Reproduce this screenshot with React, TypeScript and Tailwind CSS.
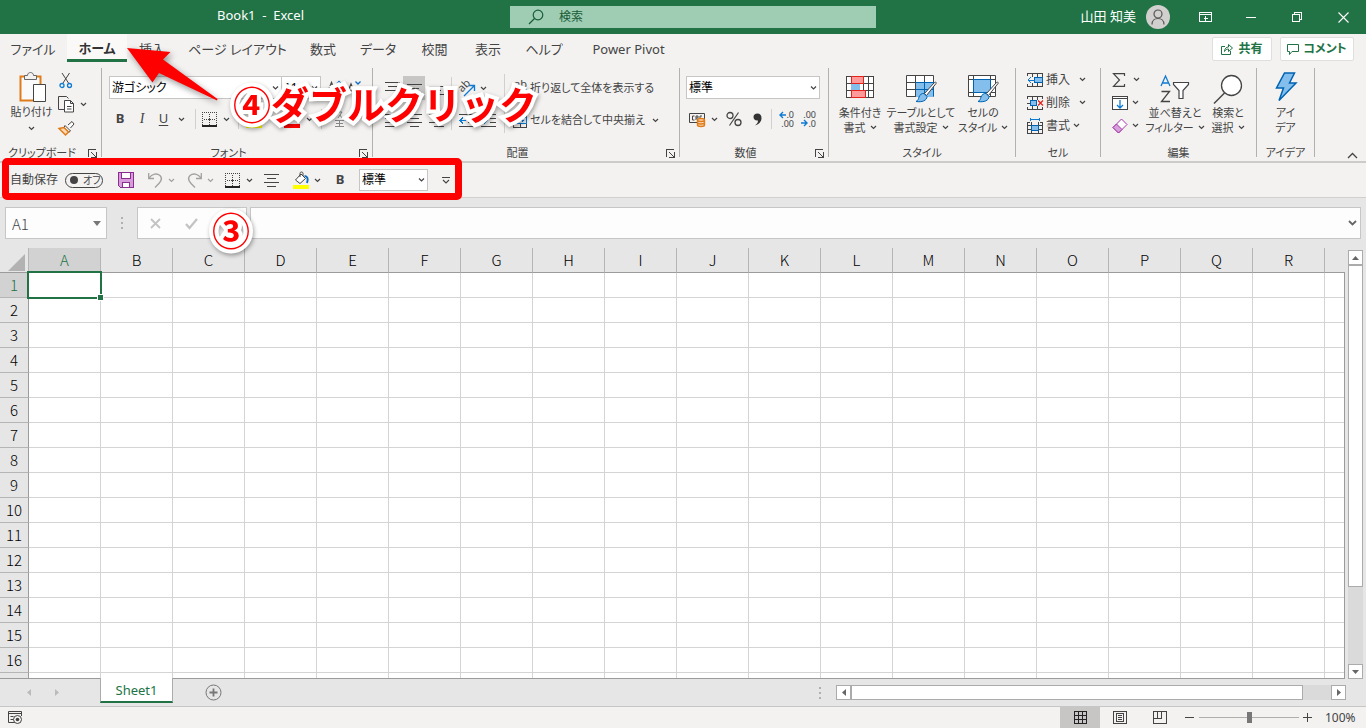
import type { ReactNode } from "react";
import clsx from "clsx";

const COLUMNS = ["A", "B", "C", "D", "E", "F", "G", "H", "I", "J", "K", "L", "M", "N", "O", "P", "Q", "R", ""];
const ROWS = Array.from({ length: 17 }, (_, i) => i + 1);

const TABS = [
  { label: "ファイル", width: "w-[66px]" },
  { label: "ホーム", width: "w-[60px]", active: true },
  { label: "挿入", width: "w-[50px]" },
  { label: "ページ レイアウト", width: "w-[121px]" },
  { label: "数式", width: "w-[50px]" },
  { label: "データ", width: "w-[60px]" },
  { label: "校閲", width: "w-[53px]" },
  { label: "表示", width: "w-[54px]" },
  { label: "ヘルプ", width: "w-[58px]" },
  { label: "Power Pivot", width: "w-[111px]" },
];

type IconProps = {
  w: number;
  h: number;
  className?: string;
  crisp?: boolean;
  children: ReactNode;
};

function Icon({ w, h, className, crisp, children }: IconProps) {
  return (
    <svg
      width={w}
      height={h}
      viewBox={`0 0 ${w} ${h}`}
      fill="none"
      stroke="#444"
      shapeRendering={crisp ? "crispEdges" : undefined}
      className={clsx("shrink-0 overflow-visible", className)}
      aria-hidden="true"
    >
      {children}
    </svg>
  );
}

function Chevron({ className, color = "#444" }: { className?: string; color?: string }) {
  return (
    <Icon w={7} h={5} className={className}>
      <path d="M1 1l2.5 2.5L6 1" stroke={color} strokeWidth="1.2" />
    </Icon>
  );
}

function IconButton({ label, className, children }: { label: string; className?: string; children: ReactNode }) {
  return (
    <button type="button" aria-label={label} className={clsx("flex h-6 shrink-0 items-center justify-center", className)}>
      {children}
    </button>
  );
}

function Separator({ className }: { className?: string }) {
  return (
    <div className={clsx("flex shrink-0 justify-center", className)}>
      <div className="w-px bg-[#d2d0ce]" />
    </div>
  );
}

function Combo({ label, value, className }: { label: string; value: string; className?: string }) {
  return (
    <div className={clsx("relative shrink-0", className)}>
      <select
        aria-label={label}
        defaultValue={value}
        className="block size-full appearance-none border border-[#c8c6c4] bg-white pl-[2px] text-xs text-black outline-none"
      >
        <option>{value}</option>
      </select>
      <Chevron className="pointer-events-none absolute right-[3px] top-1/2 -translate-y-1/2" />
    </div>
  );
}

function Group({
  title,
  launcher,
  className,
  children,
}: {
  title: string;
  launcher?: boolean;
  className: string;
  children: ReactNode;
}) {
  return (
    <>
      <section aria-label={title} className={clsx("flex shrink-0 flex-col", className)}>
        <div className="flex h-[78px]">{children}</div>
        <div className="flex h-[14px] items-center">
          <span className="flex-1 whitespace-nowrap text-center text-[11px] leading-[14px]">{title}</span>
          {launcher && (
            <button type="button" aria-label={`${title}の設定`} className="flex w-[17px] justify-center">
              <Icon w={9} h={9} crisp>
                <path d="M.5 8V.5H8M8.5 3v5.5H3M3.5 3.5l5 5" />
              </Icon>
            </button>
          )}
        </div>
      </section>
      <div className="h-[89px] w-px shrink-0 bg-[#b3b0ad]" />
    </>
  );
}

function LargeButton({
  icon,
  lines,
  chevron,
  className,
}: {
  icon: ReactNode;
  lines: [string, string];
  chevron?: boolean;
  className: string;
}) {
  return (
    <button
      type="button"
      className={clsx("flex shrink-0 flex-col items-center whitespace-nowrap text-[11px] leading-[15px]", className)}
    >
      <span className="flex h-[37px] items-center">{icon}</span>
      <span>{lines[0]}</span>
      <span className="flex items-center gap-1">
        {lines[1]}
        {chevron && <Chevron />}
      </span>
    </button>
  );
}

function LinesIcon({ rows }: { rows: [number, number, number][] }) {
  return (
    <Icon w={15} h={13} crisp>
      {rows.map(([x, y, width]) => (
        <path key={y} d={`M${x} ${y}.5h${width}`} />
      ))}
    </Icon>
  );
}

function BordersIcon() {
  return (
    <Icon w={15} h={15} crisp>
      <path d="M0 .5h15" strokeDasharray="1 1" />
      <path d="M.5 0v13M14.5 0v13" strokeDasharray="1 1" />
      <path d="M7.5 2v11M2 7.5h11" strokeDasharray="1 1" />
      <path d="M6 7.5h3M7.5 6v3" />
      <path d="M0 14h15" stroke="#222" strokeWidth="2" />
    </Icon>
  );
}

function FillIcon() {
  return (
    <Icon w={17} h={18}>
      <path d="M2.5 9L8 3l4.5 4.5L7 12.500z" fill="#fff" />
      <path d="M7 6V2.500c0-2 3-2 3 0V5" />
      <path d="M11.500 5c3 0 4 3 2.500 7" stroke="#0f6cbd" strokeWidth="2" />
      <path d="M0 16h16" stroke="#ff0" strokeWidth="4" />
    </Icon>
  );
}

function BrushOverlay() {
  return (
    <>
      <path d="M30 8.500L20.500 20.500l-2-2L28 8c1.500-1.500 3-.5 2 .5z" fill="#fff" />
      <path d="M18 18.500l3 3c0 4-5 6-11 5 2-1 2.500-2.500 3-4.500s3-4 5-3.500z" fill="#83beec" stroke="#0063b1" />
    </>
  );
}

function Ribbon() {
  return (
    <div className="flex h-[97px] shrink-0 overflow-hidden border-b-2 border-[#cdcbc9] bg-[#f3f2f1] pt-[2px] text-xs text-[#444]">
      <Group title="クリップボード" launcher className="w-[101px]">
        <button type="button" className="ml-2 flex w-[47px] shrink-0 flex-col items-center whitespace-nowrap text-[11px]">
          <Icon w={30} h={33} className="mt-[3px]">
            <path d="M3.500 5.500h20v24h-20z" fill="#fafafa" stroke="#e07b1a" strokeWidth="2" />
            <path d="M7.500 8.500v-4h3c0-4 6-4 6 0h3v4z" fill="#f3f2f1" stroke="#666" />
            <path d="M16.500 13.500h12v17h-12z" fill="#fff" />
          </Icon>
          <span className="leading-[15px]">貼り付け</span>
          <Chevron className="mt-[7px]" />
        </button>
        <div className="flex flex-col items-start">
          <IconButton label="切り取り" className="w-[22px]">
            <Icon w={14} h={17}>
              <path d="M3 1l6.500 10M10.500 1L4 11" />
              <circle cx="3" cy="13.500" r="2" stroke="#0f7ad1" strokeWidth="1.300" />
              <circle cx="10.500" cy="13.500" r="2" stroke="#0f7ad1" strokeWidth="1.300" />
            </Icon>
          </IconButton>
          <IconButton label="コピー" className="gap-[5px] pl-[3px]">
            <Icon w={17} h={17}>
              <path d="M6 13.500H.5V.5h8l2 2" />
              <path d="M6.500 4.500h6l3 3v8.500h-9zM12.500 4.500v3h3M9 10.500h4.500M9 13h4.500" fill="#fff" />
            </Icon>
            <Chevron />
          </IconButton>
          <IconButton label="書式のコピー/貼り付け" className="w-[22px]">
            <Icon w={17} h={15}>
              <path d="M10 4l4-3.500 2 2.500-3.500 4" fill="#fff" />
              <path d="M7 4.500l5.500 5.500-2 1.500L6 6.500z" fill="#fff" />
              <path d="M6 6.500L1 7.500l6.500 6.500 3-3z" fill="#fbd9b5" stroke="#e07b1a" strokeWidth="1.500" />
            </Icon>
          </IconButton>
        </div>
      </Group>

      <Group title="フォント" launcher className="w-[270px]">
        <div className="flex flex-col pl-[7px] pt-2">
          <div className="flex h-[23px]">
            <Combo label="フォント名" value="游ゴシック" className="-mr-px w-[173px]" />
            <Combo label="フォント サイズ" value="11" className="w-10" />
            <IconButton label="フォント サイズの拡大" className="w-[22px] pl-1">
              <Icon w={17} h={16}>
                <path d="M1 14L5.500 2.500 10 14M2.500 10h6" strokeWidth="1.300" />
                <path d="M10.500 4L13 1.500 15.500 4" stroke="#0f6cbd" strokeWidth="1.300" />
              </Icon>
            </IconButton>
            <IconButton label="フォント サイズの縮小" className="w-[22px]">
              <Icon w={16} h={16}>
                <path d="M1 14L5 4l4 10M2.500 10.500h5" strokeWidth="1.300" />
                <path d="M9.500 1.500L12 4l2.500-2.500" stroke="#0f6cbd" strokeWidth="1.300" />
              </Icon>
            </IconButton>
          </div>
          <div className="mt-2 flex items-center">
            <IconButton label="太字" className="w-[22px]">
              <span className="text-[13px] font-bold">B</span>
            </IconButton>
            <IconButton label="斜体" className="w-[22px]">
              <span className="font-['Liberation_Serif',serif] text-sm italic">I</span>
            </IconButton>
            <IconButton label="下線" className="w-[21px]">
              <span className="text-[13px] underline underline-offset-2">U</span>
            </IconButton>
            <Chevron className="mx-1" />
            <Separator className="h-5 w-[13px]" />
            <IconButton label="罫線" className="gap-[6px]">
              <BordersIcon />
              <Chevron />
            </IconButton>
            <Separator className="h-5 w-4" />
            <IconButton label="塗りつぶしの色" className="gap-[6px]">
              <FillIcon />
              <Chevron />
            </IconButton>
            <IconButton label="フォントの色" className="ml-2 gap-[6px]">
              <Icon w={16} h={18}>
                <path d="M3 12L8 1l5 11M5 8h6" strokeWidth="1.300" />
                <path d="M0 16h16" stroke="#f00" strokeWidth="4" />
              </Icon>
              <Chevron />
            </IconButton>
            <Separator className="h-5 w-4" />
            <IconButton label="ふりがな" className="w-5">
              <Icon w={9} h={17}>
                <path d="M2 1h5L3 7M5 4l2 3M0 9.500h9M1 12.500h7M0 15.500h9M4.500 9v7" stroke="#888" />
              </Icon>
            </IconButton>
          </div>
        </div>
      </Group>

      <Group title="配置" launcher className="w-[306px]">
        <div className="grid h-[71px] grid-cols-3 content-start gap-y-2 pl-[8px] pt-2">
          <IconButton label="上揃え" className="w-[22px]">
            <LinesIcon rows={[[0, 0, 15], [3, 4, 9], [0, 8, 15]]} />
          </IconButton>
          <IconButton label="上下中央揃え" className="w-[22px] bg-[#c8c6c4]">
            <LinesIcon rows={[[0, 2, 15], [3, 6, 9], [0, 10, 15]]} />
          </IconButton>
          <IconButton label="下揃え" className="w-[22px]">
            <LinesIcon rows={[[0, 4, 15], [3, 8, 9], [0, 12, 15]]} />
          </IconButton>
          <IconButton label="左揃え" className="w-[22px]">
            <LinesIcon rows={[[0, 0, 15], [0, 4, 10], [0, 8, 15], [0, 12, 10]]} />
          </IconButton>
          <IconButton label="中央揃え" className="w-[22px]">
            <LinesIcon rows={[[0, 0, 15], [3, 4, 9], [0, 8, 15], [3, 12, 9]]} />
          </IconButton>
          <IconButton label="右揃え" className="w-[22px]">
            <LinesIcon rows={[[0, 0, 15], [5, 4, 10], [0, 8, 15], [5, 12, 10]]} />
          </IconButton>
        </div>
        <Separator className="mt-[9px] h-[53px] w-2" />
        <div className="flex w-[45px] flex-col items-start gap-2 pt-2">
          <IconButton label="方向" className="gap-1 pl-1">
            <Icon w={17} h={17}>
              <text x="1" y="12" transform="rotate(-45 3 10)" fontSize="11" fill="#444" stroke="none">
                ab
              </text>
              <path d="M5 16L15 6M10 5.500h5.500V11" stroke="#0f7ad1" strokeWidth="1.300" />
            </Icon>
            <Chevron />
          </IconButton>
          <div className="flex">
            <IconButton label="インデントを減らす" className="w-[22px]">
              <Icon w={15} h={13} crisp>
                <path d="M0 .5h15M9 4.500h6M9 8.500h6M0 12.500h15" />
                <path d="M0 6.500h7M1 6.500l3-3M1 6.500l3 3" stroke="#0f7ad1" />
              </Icon>
            </IconButton>
            <IconButton label="インデントを増やす" className="w-[22px]">
              <Icon w={15} h={13} crisp>
                <path d="M0 .5h15M9 4.500h6M9 8.500h6M0 12.500h15" />
                <path d="M0 6.500h7M6 6.500l-3-3M6 6.500l-3 3" stroke="#0f7ad1" />
              </Icon>
            </IconButton>
          </div>
        </div>
        <Separator className="mt-[6px] h-[59px] w-[9px]" />
        <div className="flex flex-col gap-2 whitespace-nowrap pl-1 pt-2 text-[11px]">
          <button type="button" className="flex h-6 items-center gap-[3px]">
            <Icon w={14} h={18}>
              <text x="1" y="9" fontSize="11" fill="#444" stroke="none">
                ab
              </text>
              <path d="M1 10.500v5h2M6 13.500h5c3 0 3-4 1-4M8 11l-2.500 2.500L8 16" stroke="#0f7ad1" />
            </Icon>
            折り返して全体を表示する
          </button>
          <button type="button" className="flex h-6 items-center gap-[3px]">
            <Icon w={14} h={15} crisp>
              <path d="M.5.5h13v14H.5zM7.500 0v4M7.500 11v4" />
              <path d="M.5 4.500h13v6H.5z" fill="#e5f1fb" stroke="#0f7ad1" />
              <path d="M3 7.500h8M5 6v3M9 6v3" stroke="#0f7ad1" />
            </Icon>
            セルを結合して中央揃え
            <Chevron className="ml-1" />
          </button>
        </div>
      </Group>

      <Group title="数値" launcher className="w-[148px]">
        <div className="flex flex-col pl-[6px] pt-2">
          <Combo label="表示形式" value="標準" className="h-[23px] w-[134px]" />
          <div className="mt-2 flex items-center">
            <IconButton label="通貨表示形式" className="gap-[5px] pl-[3px]">
              <Icon w={17} h={15}>
                <path d="M.5 1.500h15v9H.5z" />
                <path d="M5.500 4H3.500v4H5.500M7 8V4h2v2H7M11 8V4h2" />
                <path
                  d="M8.500 8v5c0 2 7 2 7 0V8c0-2-7-2-7 0zM8.500 8c0 2 7 2 7 0M8.500 10.500c0 2 7 2 7 0"
                  fill="#fbd9b5"
                  stroke="#e07b1a"
                  strokeWidth="1.400"
                />
              </Icon>
              <Chevron />
            </IconButton>
            <IconButton label="パーセント" className="ml-1 w-6">
              <Icon w={16} h={16}>
                <circle cx="4" cy="4.500" r="3" strokeWidth="1.300" />
                <circle cx="12" cy="11.500" r="3" strokeWidth="1.300" />
                <path d="M12.500 1.500l-9 13" strokeWidth="1.200" />
              </Icon>
            </IconButton>
            <IconButton label="桁区切り" className="w-[22px]">
              <Icon w={9} h={13}>
                <path
                  d="M4.500.5C7 .5 8.500 2 8.500 5c0 4-3 6.500-6.500 7.500 2-1.500 3-3 3-5C2.500 8 .5 6.500.5 4c0-2 1.500-3.500 4-3.500z"
                  fill="#333"
                  stroke="none"
                />
              </Icon>
            </IconButton>
            <Separator className="h-5 w-[7px]" />
            {[
              { label: "小数点以下の桁数を増やす", top: ".0", bottom: ".00", arrow: "M7 4H1M4 1L1 4l3 3" },
              { label: "小数点以下の桁数を減らす", top: ".00", bottom: ".0", arrow: "M0 12h6M3 9l3 3-3 3" },
            ].map((item) => (
              <IconButton key={item.label} label={item.label} className="w-[22px]">
                <Icon w={15} h={17}>
                  <text x="15" y="7" textAnchor="end" fontSize="9" fill="#444" stroke="none">
                    {item.top}
                  </text>
                  <text x="15" y="16" textAnchor="end" fontSize="9" fill="#444" stroke="none">
                    {item.bottom}
                  </text>
                  <path d={item.arrow} stroke="#0f7ad1" strokeWidth="1.400" />
                </Icon>
              </IconButton>
            ))}
          </div>
        </div>
      </Group>

      <Group title="スタイル" className="w-[186px]">
        <LargeButton
          className="ml-1 w-[54px]"
          lines={["条件付き", "書式"]}
          chevron
          icon={
            <Icon w={28} h={22} crisp>
              <path d="M.5.5h27v21H.5z" fill="#fff" />
              <path d="M0 7.500h28M0 14.500h28M5.500 0v22M17.500 0v22M22.500 0v22" />
              <path d="M5 7h9v8H5z" fill="#83beec" stroke="none" />
              <path d="M5.500.5h12v7h-12zM5.500 14.500h14v7h-14z" fill="#ff9a9a" stroke="#e3221a" />
            </Icon>
          }
        />
        <LargeButton
          className="w-[68px]"
          lines={["テーブルとして", "書式設定"]}
          chevron
          icon={
            <Icon w={31} h={28} className="mt-1">
              <path d="M.5.5h27v21H.5z" fill="#fff" />
              <path d="M10 8h18v14H10z" fill="#83beec" stroke="none" />
              <path d="M0 7.500h28M0 14.500h28M9.500 0v22M18.500 0v22" />
              <path d="M9.500 7.500h18v14M9.500 14.500h18M18.500 8v13" stroke="#0063b1" />
              <BrushOverlay />
            </Icon>
          }
        />
        <LargeButton
          className="w-[56px]"
          lines={["セルの", "スタイル"]}
          chevron
          icon={
            <Icon w={31} h={28} className="mt-1">
              <path d="M.5.5h27v21H.5z" fill="#fff" />
              <path d="M0 4.500h28M0 17.500h28M5.500 0v22M22.500 0v22" />
              <path d="M5.500 4.500h17v13h-17z" fill="#83beec" stroke="#0063b1" />
              <BrushOverlay />
            </Icon>
          }
        />
      </Group>

      <Group title="セル" className="w-[84px]">
        <div className="flex flex-col pl-[11px]">
          <button type="button" className="flex h-[23px] items-center gap-[3px] whitespace-nowrap">
            <Icon w={16} h={14} crisp>
              <path d="M0 .5h16M0 13.500h16M.5 0v3M5.500 0v4M5.500 10v4M10.500 0v4M10.500 10v4M15.500 0v14M.5 11v3" />
              <path d="M7 4.500h8.500v5H7z" fill="#83beec" stroke="#0063b1" />
              <path d="M8 7H1M4 4L1 7l3 3" stroke="#0f7ad1" />
            </Icon>
            挿入
            <Chevron className="ml-[6px]" />
          </button>
          <button type="button" className="flex h-[23px] items-center gap-[3px] whitespace-nowrap">
            <Icon w={16} h={14} crisp>
              <path d="M0 .5h16M0 13.500h16M.5 0v3M5.500 0v4M5.500 10v4M10.500 0v4M10.500 10v4M15.500 0v3M.5 11v3M15.500 11v3M0 7h4" />
              <path d="M3.500 4.500h6v5h-6z" fill="#83beec" stroke="#0063b1" />
              <path d="M11 4.500l5 5M16 4.500l-5 5" stroke="#e3221a" shapeRendering="auto" strokeWidth="1.300" />
            </Icon>
            削除
            <Chevron className="ml-[6px]" />
          </button>
          <button type="button" className="flex h-[23px] items-center gap-[3px] whitespace-nowrap">
            <Icon w={16} h={16} crisp>
              <path d="M.5 4v12M4.500 4v12M11.500 4v12M15.500 4v12M0 4.500h3M13 4.500h3M0 11.500h16M0 7.500h16M0 15.500h16" />
              <path d="M4.500 7.500h7v5h-7z" fill="#83beec" stroke="#0063b1" />
              <path d="M3 1.500h10M3.500 0v3M12.500 0v3" stroke="#0f7ad1" />
            </Icon>
            書式
            <Chevron />
          </button>
        </div>
      </Group>

      <Group title="編集" className="w-[155px]">
        <div className="flex w-[45px] flex-col items-start pl-[11px]">
          <IconButton label="合計" className="h-[23px] gap-[7px]">
            <Icon w={14} h={14}>
              <path d="M12.500 3V.6H1.500L7.500 7l-6 6.400h11V11" strokeWidth="1.200" />
            </Icon>
            <Chevron />
          </IconButton>
          <IconButton label="フィル" className="h-[23px] gap-1">
            <Icon w={16} h={14} crisp>
              <path d="M.5.5h15v13H.5zM0 2.500h16" fill="#fff" />
              <path d="M8 4v8M5 9l3 3 3-3" stroke="#0f7ad1" shapeRendering="auto" strokeWidth="1.300" />
            </Icon>
            <Chevron />
          </IconButton>
          <IconButton label="クリア" className="h-[23px] gap-1">
            <Icon w={16} h={16}>
              <path d="M9.500 1L15 6.500 6.500 15 1 9.500z" fill="#fff" stroke="#a333a8" />
              <path d="M4.500 6L10 11.500 6.500 15 1 9.500z" fill="#d6a0da" stroke="#a333a8" />
            </Icon>
            <Chevron />
          </IconButton>
        </div>
        <LargeButton
          className="w-[58px]"
          lines={["並べ替えと", "フィルター"]}
          chevron
          icon={
            <Icon w={30} h={28} className="mt-1">
              <path d="M1 11L5.500 1 10 11M2.500 8h6" stroke="#0f7ad1" strokeWidth="1.300" />
              <path d="M1.500 16.500h8l-8 10h8.500" strokeWidth="1.300" />
              <path d="M13.500 7.500h15v2l-5.500 6v8h-4v-8l-5.500-6z" fill="#fff" strokeWidth="1.200" />
            </Icon>
          }
        />
        <LargeButton
          className="w-[48px]"
          lines={["検索と", "選択"]}
          chevron
          icon={
            <Icon w={31} h={30} className="mt-1">
              <circle cx="18.500" cy="11.500" r="10" fill="#fff" strokeWidth="1.300" />
              <path d="M11.500 19L1 29.500" strokeWidth="1.400" />
            </Icon>
          }
        />
      </Group>

      <Group title="アイデア" className="w-[57px]">
        <LargeButton
          className="w-full"
          lines={["アイ", "デア"]}
          icon={
            <Icon w={22} h={30}>
              <path d="M9.500 1h10l-5 10h6.500L4 28.500 8.500 16H1.500z" fill="#83beec" stroke="#0063b1" strokeWidth="1.500" />
            </Icon>
          }
        />
      </Group>

      <div className="flex flex-1 items-end justify-end pb-[2px] pr-2">
        <button type="button" aria-label="リボンを折りたたむ">
          <Icon w={11} h={7}>
            <path d="M1 6l4.500-4.500L10 6" strokeWidth="1.300" />
          </Icon>
        </button>
      </div>
    </div>
  );
}

function TitleBar() {
  return (
    <header className="flex h-[34px] shrink-0 items-center bg-[#217346] text-white">
      <div className="w-[510px] shrink-0 whitespace-pre pb-[2px] pl-[217px] text-[13px]">Book1  -  Excel</div>
      <label className="flex h-[22px] w-[366px] items-center bg-[#9fcdb3] pl-[18px]">
        <Icon w={16} h={16}>
          <circle cx="10" cy="6" r="4.800" stroke="#185c37" strokeWidth="1.200" />
          <path d="M6.500 9.500L1 15" stroke="#185c37" strokeWidth="1.300" />
        </Icon>
        <input
          type="text"
          aria-label="検索"
          placeholder="検索"
          className="ml-[15px] min-w-0 flex-1 bg-transparent text-xs outline-none placeholder:text-[#185c37]"
        />
      </label>
      <div className="ml-auto flex items-center">
        <span className="text-[13px]">山田 知美</span>
        <span className="ml-[10px] mr-3 flex size-6 items-center justify-center rounded-full bg-[#d2d0ce]">
          <Icon w={14} h={16}>
            <circle cx="7" cy="5" r="4" stroke="#555" strokeWidth="1.200" />
            <path d="M1 15.500c0-8 12-8 12 0" stroke="#555" strokeWidth="1.200" />
          </Icon>
        </span>
        <IconButton label="リボンの表示オプション" className="w-[46px]">
          <Icon w={13} h={10} crisp>
            <path d="M.5.5h12v9H.5zM0 2.500h13M6.500 4v5M4.500 6h4" stroke="#fff" />
          </Icon>
        </IconButton>
        <IconButton label="最小化" className="w-[46px]">
          <Icon w={10} h={1} crisp>
            <path d="M0 .5h10" stroke="#fff" />
          </Icon>
        </IconButton>
        <IconButton label="元に戻す (縮小)" className="w-[46px]">
          <Icon w={10} h={10} crisp>
            <path d="M.5 2.500h7v7h-7zM2.500 2V.5h7v7H8" stroke="#fff" />
          </Icon>
        </IconButton>
        <IconButton label="閉じる" className="w-[46px]">
          <Icon w={11} h={11}>
            <path d="M.5.5l10 10M10.500.5l-10 10" stroke="#fff" strokeWidth="1.100" />
          </Icon>
        </IconButton>
      </div>
    </header>
  );
}

function TabRow() {
  return (
    <nav className="flex h-8 shrink-0 bg-[#f3f2f1] text-[13px] text-[#444]">
      {TABS.map((tab) => (
        <button
          key={tab.label}
          type="button"
          className={clsx(
            "h-7 shrink-0 whitespace-nowrap",
            tab.width,
            tab.active ? "ml-px border-b-[3px] border-[#217346] bg-[#faf9f8] pt-[5px] font-bold text-[#333]" : "pt-1",
          )}
        >
          {tab.label}
        </button>
      ))}
      <div className="ml-auto mr-3 mt-[3px] flex h-6 gap-2 text-xs font-bold text-[#217346]">
        <button type="button" className="flex w-[60px] items-center justify-center gap-[5px] rounded-xs border border-[#e1dfdd] bg-white">
          <Icon w={12} h={12}>
            <path d="M4 3.500H.5v8h9V8M3.500 8.500c0-3 2-4.500 4-4.500V1.500L11.500 5 7.500 8.500V6c-2 0-3 1-4 2.500z" stroke="#217346" />
          </Icon>
          共有
        </button>
        <button type="button" className="flex w-[74px] items-center justify-center gap-1 whitespace-nowrap rounded-xs border border-[#e1dfdd] bg-white">
          <Icon w={12} h={11}>
            <path d="M.5.5h11v7H5l-2.500 3v-3h-2z" stroke="#217346" />
          </Icon>
          コメント
        </button>
      </div>
    </nav>
  );
}

function QuickAccessBar() {
  return (
    <div className="flex h-[35px] shrink-0 items-center border-b border-[#d2d0ce] bg-[#f3f2f1] pl-[10px] text-xs text-[#444]">
      <label className="flex items-center gap-[7px]">
        自動保存
        <span className="flex h-[15px] w-[38px] items-center rounded-full border border-[#444] pl-1">
          <input type="checkbox" className="size-2 appearance-none rounded-full bg-[#444]" />
          <span className="ml-[5px] text-[10px] leading-none">オフ</span>
        </span>
      </label>
      <IconButton label="上書き保存" className="ml-[15px]">
        <Icon w={16} h={16} crisp>
          <path d="M.5.5h15v15h-13l-2-2z" fill="#d79ddb" stroke="#8b2d92" />
          <path d="M3.500.5h9v6h-9zM4.500 10.500h7v5h-7z" fill="#fff" stroke="#8b2d92" />
        </Icon>
      </IconButton>
      <IconButton label="元に戻す" className="ml-[14px] gap-[5px]">
        <Icon w={15} h={16}>
          <path d="M.7 1v5.500H6M1 6C4 1.500 9 1 12 3.500c4 4-1 8-5 12" stroke="#a3a19f" strokeWidth="1.300" />
        </Icon>
        <Chevron color="#a3a19f" />
      </IconButton>
      <IconButton label="やり直し" className="ml-3 gap-[5px]">
        <Icon w={15} h={16}>
          <path d="M14.300 1v5.500H9M14 6C11 1.500 6 1 3 3.500c-4 4 1 8 5 12" stroke="#a3a19f" strokeWidth="1.300" />
        </Icon>
        <Chevron color="#a3a19f" />
      </IconButton>
      <IconButton label="罫線" className="ml-[11px] gap-[6px]">
        <BordersIcon />
        <Chevron />
      </IconButton>
      <IconButton label="中央揃え" className="ml-[11px]">
        <LinesIcon rows={[[0, 0, 15], [3, 4, 9], [0, 8, 15], [3, 12, 9]]} />
      </IconButton>
      <IconButton label="塗りつぶしの色" className="ml-[14px] gap-1">
        <FillIcon />
        <Chevron />
      </IconButton>
      <IconButton label="太字" className="ml-2 w-[22px]">
        <span className="text-[13px] font-bold">B</span>
      </IconButton>
      <Combo label="表示形式" value="標準" className="ml-2 h-[22px] w-[69px]" />
      <IconButton label="クイック アクセス ツール バーのユーザー設定" className="ml-[14px]">
        <Icon w={8} h={8}>
          <path d="M0 1.500h8M1 4l3 3 3-3" strokeWidth="1.100" />
        </Icon>
      </IconButton>
    </div>
  );
}

function Dots() {
  return (
    <div className="flex flex-col gap-[3px]">
      <span className="size-[2px] bg-[#b0b0b0]" />
      <span className="size-[2px] bg-[#b0b0b0]" />
      <span className="size-[2px] bg-[#b0b0b0]" />
    </div>
  );
}

function FormulaBar() {
  return (
    <div className="flex h-[50px] shrink-0 items-start bg-[#e6e6e6] pl-[5px] pr-[5px] pt-[9px]">
      <div className="flex h-8 w-[102px] items-center border border-[#c6c6c6] bg-[#fdfdfd] pr-[5px]">
        <input
          type="text"
          aria-label="名前ボックス"
          defaultValue="A1"
          className="min-w-0 flex-1 bg-transparent pl-[6px] pt-[2px] font-['Noto_Sans_CJK_JP',sans-serif] text-[15px] font-light text-[#444] outline-none"
        />
        <Icon w={8} h={5}>
          <path d="M0 0h8L4 5z" fill="#777" stroke="none" />
        </Icon>
      </div>
      <div className="flex h-8 w-[30px] items-center justify-center">
        <Dots />
      </div>
      <div className="flex h-8 w-[110px] items-center border border-[#c6c6c6] bg-[#fdfdfd] pl-[6px]">
        <IconButton label="キャンセル" className="w-[22px]">
          <Icon w={11} h={11}>
            <path d="M1 1l9 9M10 1l-9 9" stroke="#c3c3c3" strokeWidth="1.800" />
          </Icon>
        </IconButton>
        <IconButton label="入力" className="ml-[14px] w-[22px]">
          <Icon w={13} h={11}>
            <path d="M1 6l3.500 4L12 1" stroke="#c3c3c3" strokeWidth="2.200" />
          </Icon>
        </IconButton>
        <IconButton label="関数の挿入" className="ml-4 w-[22px]">
          <span className="font-['Liberation_Serif',serif] text-sm italic text-[#777]">fx</span>
        </IconButton>
      </div>
      <div className="ml-[3px] flex h-8 min-w-0 flex-1 items-center border border-[#c6c6c6] bg-[#fdfdfd] pr-[3px]">
        <input type="text" aria-label="数式バー" className="min-w-0 flex-1 bg-transparent px-2 text-sm outline-none" />
        <Icon w={9} h={6}>
          <path d="M1 1l3.500 3.500L8 1" stroke="#666" strokeWidth="1.800" />
        </Icon>
      </div>
    </div>
  );
}

function Sheet() {
  return (
    <div className="flex min-h-0 flex-1 bg-[#e6e6e6]">
      <div className="relative min-w-0 flex-1 overflow-hidden border-b border-[#9b9b9b]">
        <table className="w-max table-fixed border-separate border-spacing-0 font-['Noto_Sans_CJK_JP',sans-serif] text-[15px] font-light">
          <colgroup>
            <col className="w-[29px]" />
            {COLUMNS.map((_, i) => (
              <col key={i} className="w-[72px]" />
            ))}
          </colgroup>
          <thead>
            <tr className="h-[25px]">
              <td className="border-b border-r border-b-[#9b9b9b] border-r-[#b5b5b5] p-0">
                <Icon w={17} h={17} className="ml-2 mt-1">
                  <path d="M17 0v17H0z" fill="#b2b2b2" stroke="none" />
                </Icon>
              </td>
              {COLUMNS.map((col, i) => (
                <th
                  key={i}
                  scope="col"
                  className={clsx(
                    "border-b border-r border-b-[#9b9b9b] border-r-[#b5b5b5] p-0 font-light leading-[24px]",
                    col === "A" ? "bg-[#d2d2d2] text-[#217346]" : "text-black",
                    col === "" && "border-r-transparent",
                  )}
                >
                  {col}
                </th>
              ))}
            </tr>
          </thead>
          <tbody>
            {ROWS.map((row) => (
              <tr key={row} className="h-[25px]">
                <th
                  scope="row"
                  className={clsx(
                    "border-b border-r border-b-[#b5b5b5] border-r-[#9b9b9b] p-0 font-light leading-[24px]",
                    row === 1 ? "bg-[#d2d2d2] text-[#217346]" : "text-black",
                  )}
                >
                  {row}
                </th>
                {COLUMNS.map((col, i) => (
                  <td key={i} className="relative border-b border-r border-[#d4d4d4] bg-white p-0">
                    {row === 1 && col === "A" && (
                      <div className="absolute -inset-[2px] z-10 border-2 border-[#217346]">
                        <span className="absolute -bottom-1 -right-1 size-[7px] border border-white bg-[#217346]" />
                      </div>
                    )}
                  </td>
                ))}
              </tr>
            ))}
          </tbody>
        </table>
        <div className="absolute bottom-0 right-0 top-6 w-px bg-[#9b9b9b]" />
      </div>
      <div className="ml-[3px] mr-[3px] mt-[2px] flex w-[15px] shrink-0 flex-col bg-[#dadada]">
        <button type="button" aria-label="上へスクロール" className="flex h-[15px] items-center justify-center border border-[#ababab] bg-white">
          <Icon w={7} h={4}>
            <path d="M0 4h7L3.500 0z" fill="#666" stroke="none" />
          </Icon>
        </button>
        <div className="h-3/4 border border-[#ababab] bg-white" />
        <button type="button" aria-label="下へスクロール" className="mt-auto flex h-[15px] items-center justify-center border border-[#ababab] bg-white">
          <Icon w={7} h={4}>
            <path d="M0 0h7L3.500 4z" fill="#666" stroke="none" />
          </Icon>
        </button>
      </div>
    </div>
  );
}

function SheetTabs() {
  return (
    <div className="flex h-[27px] shrink-0 items-start bg-[#e6e6e6]">
      <div className="flex h-[27px] w-[100px] items-center gap-6 pl-[27px]">
        <Icon w={4} h={7}>
          <path d="M4 0v7L0 3.500z" fill="#bbb" stroke="none" />
        </Icon>
        <Icon w={4} h={7}>
          <path d="M0 0v7l4-3.500z" fill="#bbb" stroke="none" />
        </Icon>
      </div>
      <button
        type="button"
        className="z-10 -mt-px h-[25px] w-[73px] border-x border-b-2 border-x-[#ababab] border-b-[#217346] bg-white pt-[3px] text-[13px] text-[#217346]"
      >
        Sheet1
      </button>
      <IconButton label="新しいシート" className="ml-8 mt-px">
        <Icon w={17} h={17}>
          <circle cx="8.500" cy="8.500" r="7.500" stroke="#777" />
          <path d="M8.500 4.500v8M4.500 8.500h8" stroke="#777" strokeWidth="1.800" />
        </Icon>
      </IconButton>
      <div className="ml-auto mr-5 flex h-[27px] items-center gap-[15px]">
        <Dots />
        <div className="flex h-[15px] w-[510px] bg-[#dadada]">
          <button type="button" aria-label="左へスクロール" className="flex w-[15px] items-center justify-center border border-[#ababab] bg-white">
            <Icon w={4} h={7}>
              <path d="M4 0v7L0 3.500z" fill="#666" stroke="none" />
            </Icon>
          </button>
          <div className="w-[452px] border border-[#ababab] bg-white" />
          <button type="button" aria-label="右へスクロール" className="ml-auto flex w-[15px] items-center justify-center border border-[#ababab] bg-white">
            <Icon w={4} h={7}>
              <path d="M0 0v7l4-3.500z" fill="#666" stroke="none" />
            </Icon>
          </button>
        </div>
      </div>
    </div>
  );
}

function StatusBar() {
  return (
    <footer className="flex h-[22px] shrink-0 items-center border-t border-[#c6c6c6] bg-[#f3f2f1] pl-2 text-xs text-[#444]">
      <Icon w={15} h={14}>
        <path d="M7 11.500H.5V.5h13V5M0 2.500h14M2.500 5.500h3M2.500 8.500h3M8 5.500h2" />
        <circle cx="9.500" cy="8.500" r="4" fill="#f3f2f1" />
        <circle cx="9.500" cy="8.500" r="1.800" fill="#444" stroke="none" />
      </Icon>
      <div className="ml-auto flex h-full items-center">
        <button type="button" aria-label="標準" className="flex h-full w-10 items-center justify-center bg-[#c8c6c4]">
          <Icon w={13} h={13} crisp>
            <path d="M.5.5h12v12H.5zM4.500 0v13M8.500 0v13M0 4.500h13M0 8.500h13" stroke="#222" />
          </Icon>
        </button>
        <button type="button" aria-label="ページ レイアウト" className="flex h-full w-10 items-center justify-center">
          <Icon w={14} h={13} crisp>
            <path d="M.5.5h13v12H.5zM3.500 2.500h7v8h-7zM5 4.500h4M5 6.500h4M5 8.500h4" />
          </Icon>
        </button>
        <button type="button" aria-label="改ページ プレビュー" className="flex h-full w-10 items-center justify-center">
          <Icon w={14} h={13} crisp>
            <path d="M.5.5h13v12H.5zM4.500 0v7M8.500 0v7M0 7.500h9" />
          </Icon>
        </button>
        <IconButton label="縮小" className="w-[19px]">
          <Icon w={9} h={1} crisp>
            <path d="M0 .5h9" />
          </Icon>
        </IconButton>
        <input
          type="range"
          aria-label="ズーム"
          className="h-3 w-[100px] appearance-none bg-transparent [&::-webkit-slider-runnable-track]:h-px [&::-webkit-slider-runnable-track]:bg-[#b0aeac] [&::-webkit-slider-thumb]:-mt-[5px] [&::-webkit-slider-thumb]:h-[11px] [&::-webkit-slider-thumb]:w-[5px] [&::-webkit-slider-thumb]:appearance-none [&::-webkit-slider-thumb]:bg-[#777]"
        />
        <IconButton label="拡大" className="w-[17px]">
          <Icon w={9} h={9} crisp>
            <path d="M0 4.500h9M4.500 0v9" />
          </Icon>
        </IconButton>
        <span className="w-[50px] pl-[9px]">100%</span>
      </div>
    </footer>
  );
}

const NOTE_TEXT =
  "absolute whitespace-nowrap text-[38px] font-bold leading-none text-[#f00] [-webkit-text-stroke:8px_white] [paint-order:stroke_fill] [font-feature-settings:normal] font-['Noto_Sans_CJK_JP',sans-serif] drop-shadow-[1px_2px_2px_rgba(0,0,0,0.35)]";

function Notes() {
  return (
    <div className="pointer-events-none absolute inset-0 z-20">
      <div className="absolute left-[2px] top-[158px] h-[42px] w-[460px] rounded-[5px] border-[7px] border-[#f00]" />
      <svg
        width="110"
        height="70"
        viewBox="120 40 110 70"
        className="absolute left-[120px] top-10 drop-shadow-[2px_3px_3px_rgba(0,0,0,0.4)]"
        aria-hidden="true"
      >
        <path d="M127 48l43.500 4-7.500 7.500 54.500 39.500-.5 1.500-58-27.500-6.500 9.500z" fill="#f00" />
      </svg>
      <p className={clsx(NOTE_TEXT, "left-[233px] top-[84px]")}>④ダブルクリック</p>
      <p className={clsx(NOTE_TEXT, "left-[212px] top-[210px]")}>③</p>
    </div>
  );
}

export default function App() {
  return (
    <div className="relative flex h-screen flex-col overflow-hidden font-['Noto_Sans','Noto_Sans_CJK_JP',sans-serif] [font-feature-settings:'palt']">
      <TitleBar />
      <TabRow />
      <Ribbon />
      <QuickAccessBar />
      <FormulaBar />
      <Sheet />
      <SheetTabs />
      <StatusBar />
      <Notes />
    </div>
  );
}
